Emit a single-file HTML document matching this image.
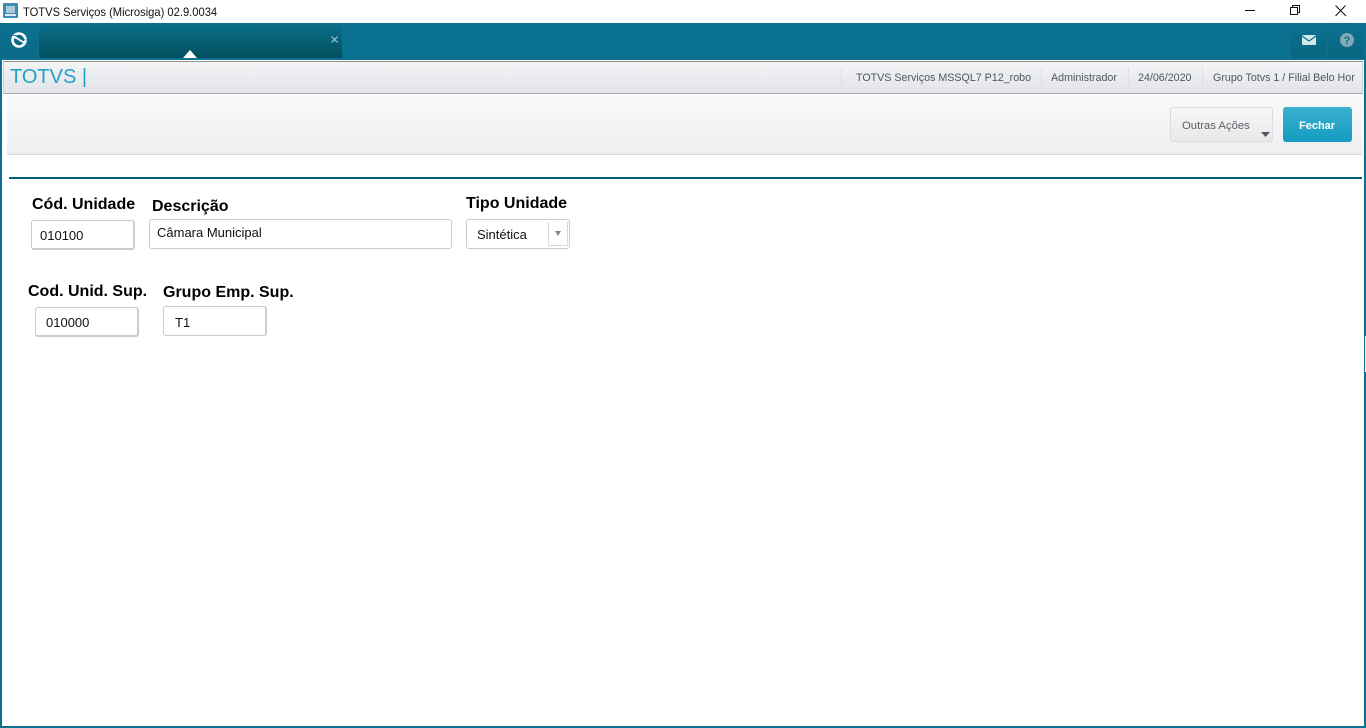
<!DOCTYPE html>
<html><head><meta charset="utf-8"><title>TOTVS Serviços (Microsiga) 02.9.0034</title>
<style>
html,body{margin:0;padding:0;width:1366px;height:728px;overflow:hidden;background:#fff;font-family:"Liberation Sans",sans-serif}
div,span,svg{position:absolute;box-sizing:border-box}
.t{white-space:nowrap;line-height:16px}
.lbl{font-weight:bold;font-size:16px;color:#000;white-space:nowrap;line-height:20px}
.inp{background:#fff;border:1px solid #cbcbcb;border-radius:3px;font-size:13px;color:#111;white-space:nowrap;line-height:16px}
.sep{top:68px;width:1px;height:18px;background:#dcdee2}
.hd{top:71px;font-size:10.7px;color:#50565f;white-space:nowrap;line-height:14px}
</style></head><body>
<!-- window frame -->
<div style="left:0;top:23px;width:2px;height:705px;background:#0b7190"></div>
<div style="left:1364px;top:23px;width:2px;height:705px;background:#0b7190"></div>
<div style="left:1365px;top:336px;width:1px;height:36px;background:#fff"></div>
<div style="left:0;top:726px;width:1366px;height:2px;background:#0b7190"></div>
<!-- title bar -->
<svg style="left:3px;top:3px" width="15" height="15" viewBox="0 0 15 15"><rect width="15" height="15" rx="1" fill="#3d8fb0"/><rect x="3" y="3" width="9" height="7" fill="#a9cbdb"/><rect x="2" y="11" width="11" height="2" fill="#dfeaf0"/></svg>
<div class="t" style="left:23px;top:4px;font-size:12px;color:#111;transform-origin:0 50%;transform:scaleX(.931)">TOTVS Serviços (Microsiga) 02.9.0034</div>
<svg style="left:1240px;top:0" width="126" height="23" viewBox="0 0 126 23" fill="none" stroke="#111" stroke-width="1"><path d="M5 10.500H15"/><path d="M50.500 7.500h7v7h-7zM52.500 7.500v-2h7v7h-2"/><path d="M95.500 5.500l10.500 10.500M105.500 5.500L95.500 16"/></svg>
<!-- teal bar -->
<div style="left:0;top:23px;width:1366px;height:37px;background:#0b7190"></div>
<div style="left:0;top:24px;width:38px;height:34px;background:linear-gradient(#0b7190,#0a6a86)"></div>
<svg style="left:10px;top:31px" width="18" height="18" viewBox="0 0 18 18" fill="none"><circle cx="9" cy="9" r="6.500" stroke="#fff" stroke-width="2.600"/><path d="M3 6.500C7 5 11 12 15 11" stroke="#fff" stroke-width="1.800"/><path d="M3 4.500C6 3 12 9 16 9" stroke="#0b7190" stroke-width=".8"/></svg>
<div style="left:39px;top:24px;width:303px;height:34px;background:linear-gradient(#0a6f8b,#04505f)"></div>
<svg style="left:331px;top:36px" width="7" height="7" viewBox="0 0 7 7" stroke="#a9c6d0" stroke-width="1.200"><path d="M.5 .5l6 6M6.500 .5l-6 6"/></svg>
<svg style="left:183px;top:50px" width="14" height="8" viewBox="0 0 14 8"><path d="M7 0L14 8H0z" fill="#fff"/></svg>
<div style="left:1291px;top:24px;width:36px;height:34px;background:linear-gradient(#0b7190,#0a6580)"></div>
<div style="left:1328px;top:24px;width:36px;height:34px;background:linear-gradient(#0b7190,#0a6580)"></div>
<svg style="left:1302px;top:35px" width="14" height="10" viewBox="0 0 14 10"><rect width="14" height="10" rx="1" fill="#d5e7ee"/><path d="M0 1l7 5 7-5" fill="none" stroke="#0b7190" stroke-width="1.200"/></svg>
<svg style="left:1340px;top:33px" width="14" height="14" viewBox="0 0 14 14"><circle cx="7" cy="7" r="7" fill="#7fa9b8"/><text x="7" y="11" font-size="11" font-weight="bold" text-anchor="middle" fill="#0b6a84" font-family="Liberation Sans">?</text></svg>
<!-- header strip -->
<div style="left:2px;top:60px;width:1362px;height:35px;background:#fff"></div>
<div style="left:3px;top:61px;width:1360px;height:33px;border-top:1px solid #8f9396;border-left:1px solid #d0d2d4;border-right:1px solid #d0d2d4;border-bottom:1px solid #a8abae;background:linear-gradient(#f3f4f6,#e2e4e8)"></div>
<div class="t" style="left:10px;top:66px;font-size:20px;line-height:23px;color:#21a1c6">TOTVS |</div>
<div class="sep" style="left:841px"></div>
<div class="sep" style="left:1041px"></div>
<div class="sep" style="left:1128px"></div>
<div class="sep" style="left:1202px"></div>
<div class="hd" style="left:856px">TOTVS Serviços MSSQL7 P12_robo</div>
<div class="hd" style="left:1051px">Administrador</div>
<div class="hd" style="left:1138px">24/06/2020</div>
<div class="hd" style="left:1213px">Grupo Totvs 1 / Filial Belo Hor</div>
<!-- toolbar -->
<div style="left:7px;top:95px;width:1355px;height:60px;background:linear-gradient(#fafafb,#edeef0);border-bottom:1px solid #dcdcdc"></div>
<div style="left:1170px;top:107px;width:103px;height:35px;border:1px solid #dcdcdc;border-radius:3px;background:linear-gradient(#f8f8f8,#e8e8e8)"></div>
<div class="hd" style="left:1182px;top:119px;font-size:11.300px;color:#5a5f68">Outras Ações</div>
<svg style="left:1261px;top:132px" width="9" height="5" viewBox="0 0 9 5"><path d="M0 0h9L4.500 5z" fill="#4f5661"/></svg>
<div style="left:1283px;top:107px;width:69px;height:35px;border-radius:3px;background:linear-gradient(#3cb0cf,#129dc1)"></div>
<div class="t" style="left:1299px;top:118px;font-size:11px;font-weight:bold;color:#fff">Fechar</div>
<!-- rule -->
<div style="left:9px;top:177px;width:1353px;height:2px;background:#005f7a"></div>
<!-- form -->
<div class="lbl" style="left:32px;top:195px">Cód. Unidade</div>
<div class="inp" style="left:31px;top:220px;width:104px;height:30px;border-right:2px solid #cbcbcb;border-bottom:2px solid #cbcbcb;padding:7px 0 0 8px">010100</div>
<div class="lbl" style="left:152px;top:197px">Descrição</div>
<div class="inp" style="left:149px;top:219px;width:303px;height:30px;padding:5px 0 0 7px">Câmara Municipal</div>
<div class="lbl" style="left:466px;top:194px">Tipo Unidade</div>
<div class="inp" style="left:466px;top:219px;width:104px;height:30px;padding:7px 0 0 10px">Sintética</div>
<div style="left:548px;top:222px;width:20px;height:24px;border-left:1px solid #d8d8d8;border-bottom:1px solid #d8d8d8;border-right:1px solid #d8d8d8;background:#fff"></div>
<svg style="left:555px;top:231px" width="6" height="5" viewBox="0 0 6 5"><path d="M0 0h6L3 5z" fill="#808590"/></svg>
<div class="lbl" style="left:28px;top:282px">Cod. Unid. Sup.</div>
<div class="inp" style="left:35px;top:307px;width:104px;height:30px;border-right:2px solid #cbcbcb;border-bottom:2px solid #cbcbcb;padding:7px 0 0 10px">010000</div>
<div class="lbl" style="left:163px;top:283px">Grupo Emp. Sup.</div>
<div class="inp" style="left:163px;top:306px;width:104px;height:30px;border-right:2px solid #cbcbcb;padding:8px 0 0 11px">T1</div>
</body></html>
